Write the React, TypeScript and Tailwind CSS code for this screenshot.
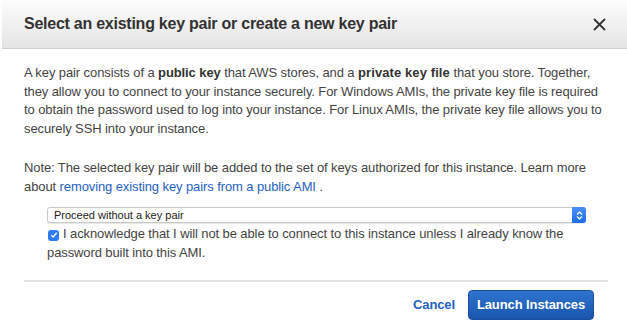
export default function App() {
  return (
    <div className="w-[627px] h-[330px] bg-white text-[#333] font-['Liberation_Sans',Arial,sans-serif] overflow-hidden">
      {/* Header */}
      <div className="h-[49px] ml-[2px] flex items-center justify-between pl-[22px] pr-[21px] bg-gradient-to-b from-[#fdfdfd] to-[#e4e4e4] border-b border-[#cfcfcf]">
        <h2 className="text-[16px] font-bold text-[#333] tracking-[-0.25px]">
          Select an existing key pair or create a new key pair
        </h2>
        <button className="text-[#333]">
          <svg width="13" height="13" viewBox="0 0 13 13">
            <path d="M1.5 1.5 L11.5 11.5 M11.5 1.5 L1.5 11.5" stroke="#333" strokeWidth="1.8" strokeLinecap="round" />
          </svg>
        </button>
      </div>

      {/* Body */}
      <div className="pl-6 pr-[19px] pt-[15px] text-[13px] leading-[18.5px] tracking-[-0.1px] text-[#444]">
        <p>
          A key pair consists of a <b className="text-[#333]">public key</b> that AWS stores, and a{" "}
          <b className="text-[#333] tracking-[0.1px]">private key file</b> that you store. Together,
          <br />
          they allow you to connect to your instance securely. For Windows AMIs, the private key file is required
          <br />
          to obtain the password used to log into your instance. For Linux AMIs, the private key file allows you to
          <br />
          securely SSH into your instance.
        </p>

        <p className="mt-[21px]">
          Note: The selected key pair will be added to the set of keys authorized for this instance. Learn more
          <br />
          about <a className="text-[#1f62c0]">removing existing key pairs from a public AMI</a> .
        </p>

        <div className="mt-[11px] ml-[23px] w-[539px]">
          <div className="h-[16px] flex items-center justify-between border border-[#c9c9c9] rounded-[3px] bg-white shadow-[0_1px_0_#e8e8e8]">
            <span className="pl-[6px] text-[11px] tracking-normal text-[#222]">Proceed without a key pair</span>
            <span className="h-[16px] w-[14px] -mr-px rounded-r-[3px] bg-gradient-to-b from-[#4a8ff7] to-[#1e6ef0] flex items-center justify-center">
              <svg width="7" height="9" viewBox="0 0 7 9">
                <path d="M1 3.5 L3.5 1 L6 3.5 M1 5.5 L3.5 8 L6 5.5" fill="none" stroke="white" strokeWidth="1.2" />
              </svg>
            </span>
          </div>
          <p className="mt-[1px] text-[13px] leading-[19px]">
            <span className="inline-flex align-[-1px] mr-[4px] ml-px w-[11px] h-[11px] rounded-[3px] bg-[#2d7cf6] items-center justify-center">
              <svg width="8" height="8" viewBox="0 0 8 8">
                <path d="M1.3 4.2 L3.2 6 L6.7 1.8" fill="none" stroke="white" strokeWidth="1.4" />
              </svg>
            </span>
            I acknowledge that I will not be able to connect to this instance unless I already know the
            <br />
            password built into this AMI.
          </p>
        </div>

        <hr className="mt-[18px] border-t-2 border-[#e2e2e2]" />

        <div className="mt-[8px] flex items-center justify-end gap-[13px] pr-[14px]">
          <button className="text-[13px] font-bold text-[#1f62c0]">Cancel</button>
          <button className="h-[30px] w-[126px] rounded-[4px] text-[13px] font-bold text-white bg-gradient-to-b from-[#2f74d0] to-[#1a55ad] border border-[#1a4f9e]">
            Launch Instances
          </button>
        </div>
      </div>
    </div>
  )
}
